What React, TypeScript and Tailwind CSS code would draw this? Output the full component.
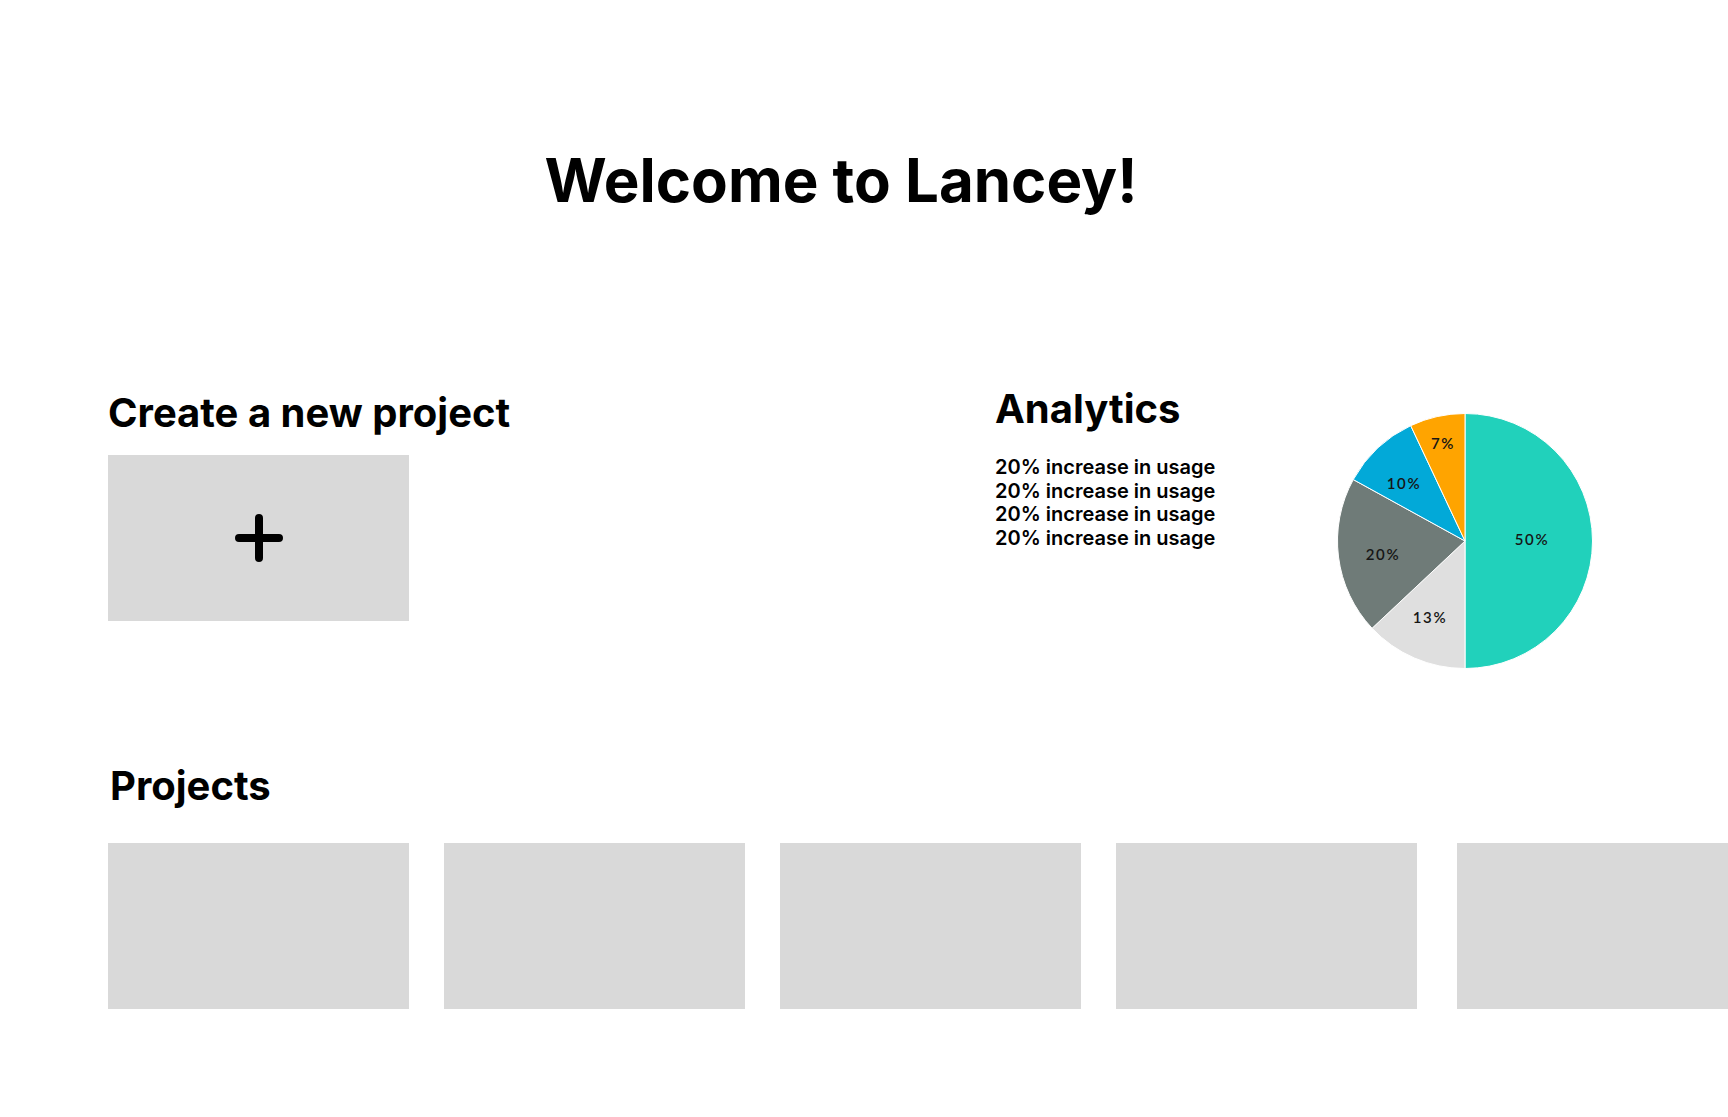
import React from "react"

const slices = [
  { from: 0, to: 180, color: "#21d1bb" },
  { from: 180, to: 226.8, color: "#dfdfdf" },
  { from: 226.8, to: 298.8, color: "#6f7b78" },
  { from: 298.8, to: 334.8, color: "#02a9d8" },
  { from: 334.8, to: 360, color: "#ffa400" },
]

const labels = [
  { text: "50%", x: 195, y: 126 },
  { text: "7%", x: 106, y: 30 },
  { text: "10%", x: 67, y: 70 },
  { text: "20%", x: 46, y: 141 },
  { text: "13%", x: 93, y: 204 },
]

function point(cx: number, cy: number, r: number, deg: number) {
  const a = (deg * Math.PI) / 180
  return [cx + r * Math.sin(a), cy - r * Math.cos(a)]
}

function slicePath(from: number, to: number) {
  const c = 128
  const r = 127.5
  const [x1, y1] = point(c, c, r, from)
  const [x2, y2] = point(c, c, r, to)
  const large = to - from > 180 ? 1 : 0
  return `M${c} ${c} L${x1} ${y1} A${r} ${r} 0 ${large} 1 ${x2} ${y2} Z`
}

function PieChart() {
  return (
    <svg width="256" height="256" viewBox="0 0 256 256">
      {slices.map((s) => (
        <path key={s.from} d={slicePath(s.from, s.to)} fill={s.color} stroke="#ffffff" strokeWidth="1" />
      ))}
      {labels.map((l) => (
        <text
          key={l.text}
          x={l.x}
          y={l.y}
          textAnchor="middle"
          dominantBaseline="central"
          fill="#161616"
          fontFamily="Lato, sans-serif"
          fontWeight="600"
          fontSize="15"
          letterSpacing="1.6"
        >
          {l.text}
        </text>
      ))}
    </svg>
  )
}

function PlusIcon() {
  return (
    <svg width="48" height="48" viewBox="0 0 48 48">
      <path d="M24 4v40M4 24h40" stroke="#000" strokeWidth="8" strokeLinecap="round" fill="none" />
    </svg>
  )
}

export default function App() {
  return (
    <div className="min-h-screen overflow-hidden bg-white font-['Inter',sans-serif] text-black">
      <h1 className="pt-[150px] pr-[46px] text-center text-[60px] font-bold leading-none">Welcome to Lancey!</h1>

      <div className="mt-[179px] flex pl-[108px]">
        <div className="w-[887px] pt-[4px]">
          <h2 className="text-[40px] font-bold leading-none">Create a new project</h2>
          <button className="mt-[22px] flex h-[166px] w-[301px] items-center justify-center bg-[#d9d9d9]">
            <PlusIcon />
          </button>
        </div>

        <div className="flex">
          <div className="w-[342px]">
            <h2 className="text-[40px] font-bold leading-none">Analytics</h2>
            <ul className="mt-[27px] text-[20px] font-semibold leading-[23.5px]">
              <li>20% increase in usage</li>
              <li>20% increase in usage</li>
              <li>20% increase in usage</li>
              <li>20% increase in usage</li>
            </ul>
          </div>
          <div className="mt-[24px]">
            <PieChart />
          </div>
        </div>
      </div>

      <div className="mt-[97px] pl-[108px]">
        <h2 className="pl-[2px] text-[40px] font-bold leading-none">Projects</h2>
        <div className="mt-[37px] flex gap-[35px]">
          <div className="h-[166px] w-[301px] shrink-0 bg-[#d9d9d9]" />
          <div className="h-[166px] w-[301px] shrink-0 bg-[#d9d9d9]" />
          <div className="h-[166px] w-[301px] shrink-0 bg-[#d9d9d9]" />
          <div className="h-[166px] w-[301px] shrink-0 bg-[#d9d9d9]" />
          <div className="ml-[5px] h-[166px] w-[301px] shrink-0 bg-[#d9d9d9]" />
        </div>
      </div>
    </div>
  )
}
